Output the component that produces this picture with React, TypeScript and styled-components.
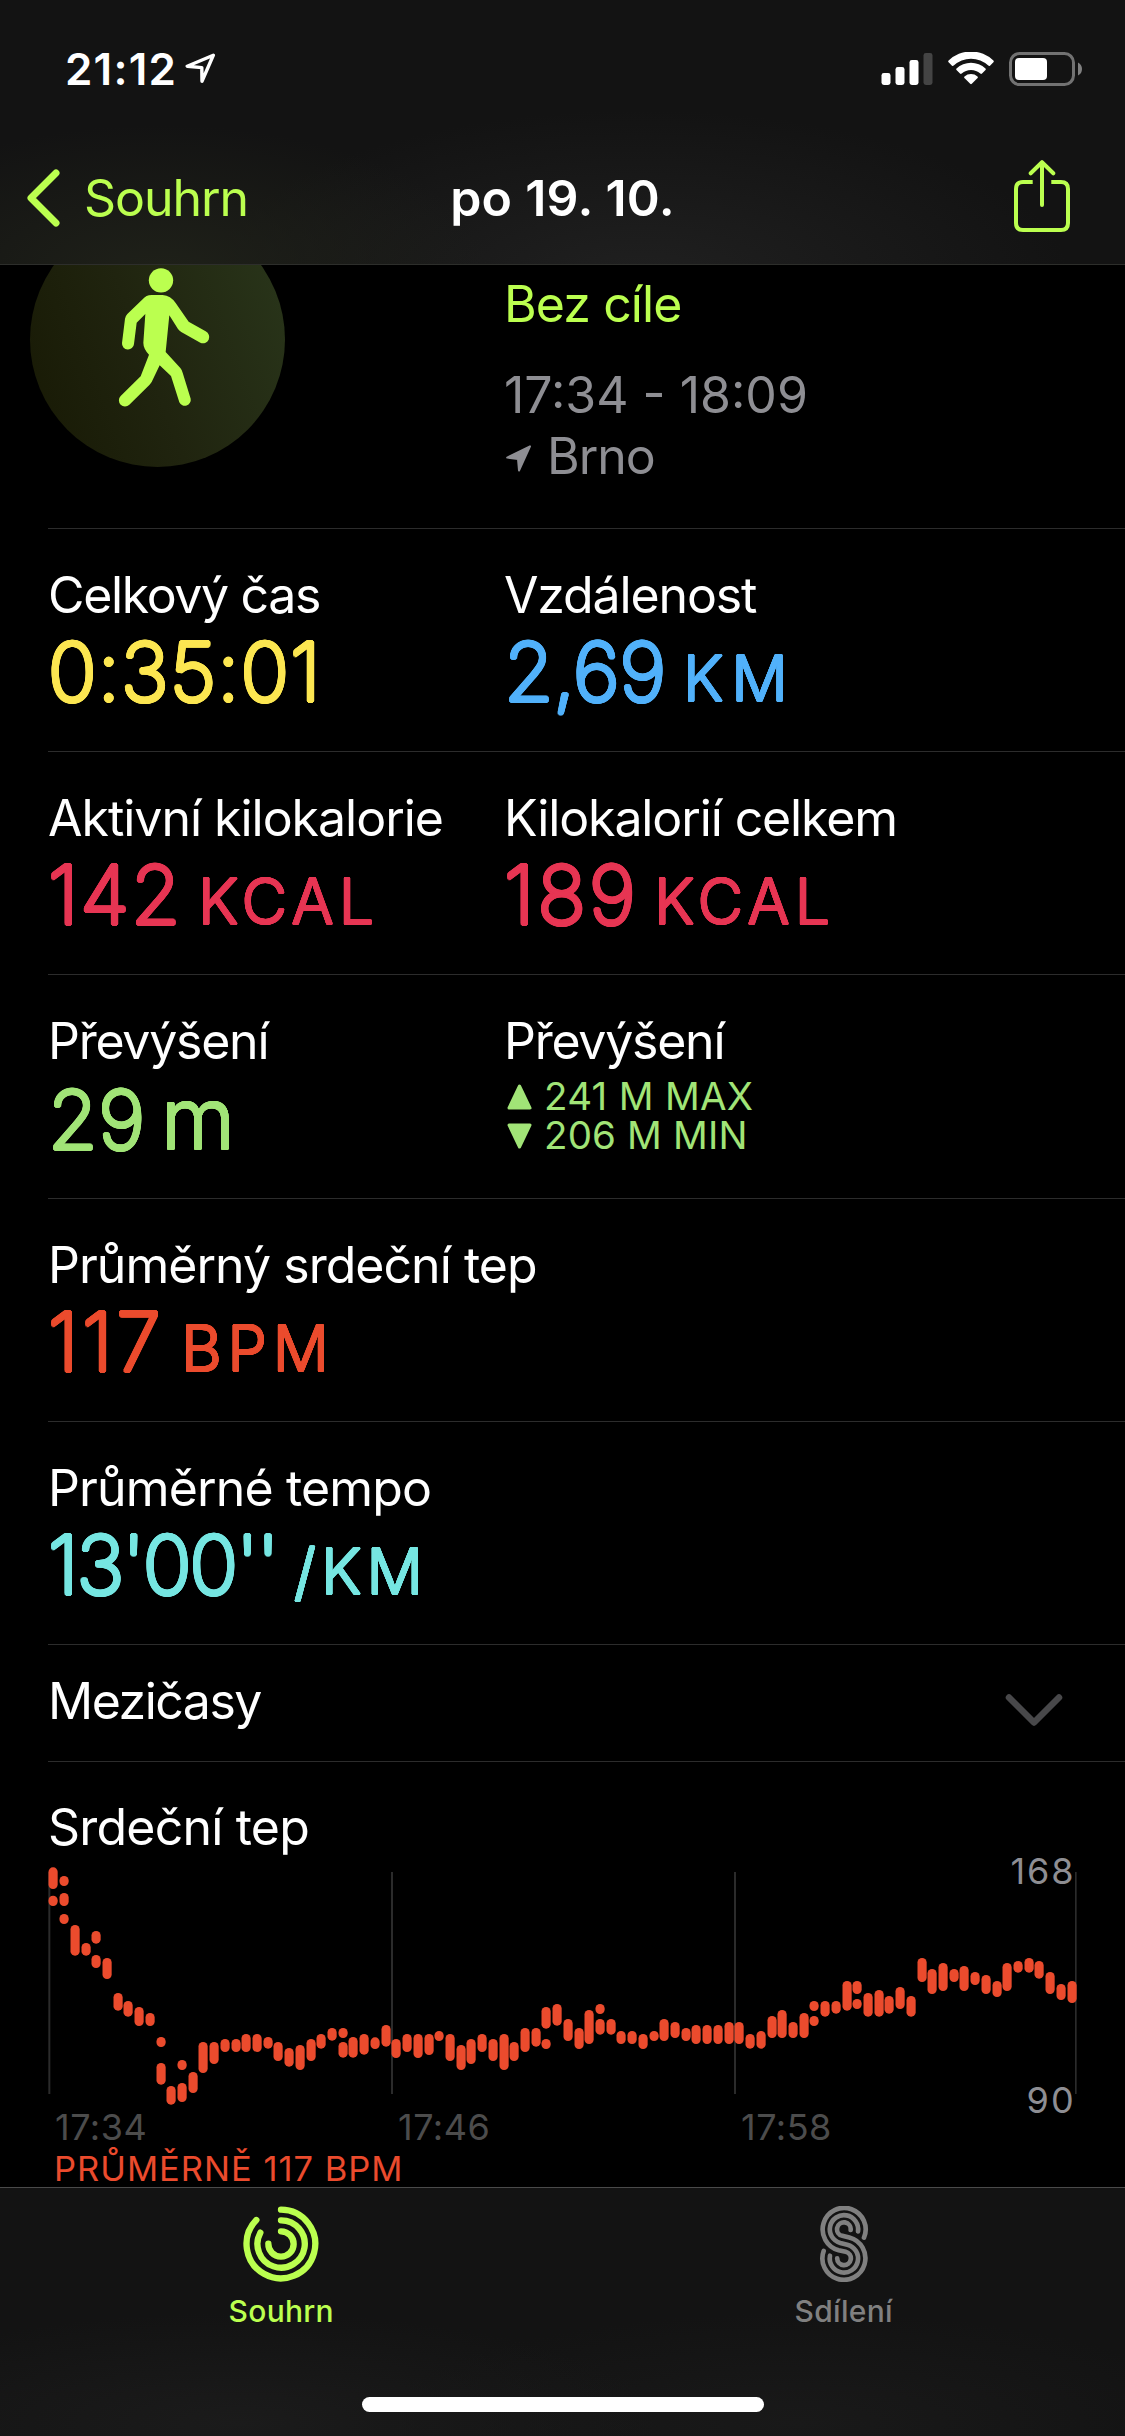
import React from "react";
import styled, { createGlobalStyle } from "styled-components";

const color = {
  lime: "#bbff4f",
  yellow: "#fce651",
  blue: "#51b1fa",
  pink: "#e73553",
  green: "#a1e477",
  red: "#eb4b2d",
  cyan: "#76e6e2",
  gray: "#8e8e93",
  axis: "#4c4c4c",
  rule: "#2c2c2c",
};

/* A ring of hard shadows thickens thin glyphs and rounds off their corners. */
const roundRing = (radius: number) =>
  Array.from({ length: 16 }, (_, i) => {
    const a = (i / 16) * Math.PI * 2;
    return `${(Math.cos(a) * radius).toFixed(2)}px ${(Math.sin(a) * radius).toFixed(2)}px 0 currentColor`;
  }).join(", ");

const GlobalStyle = createGlobalStyle`
  * { box-sizing: border-box; }
  body {
    margin: 0;
    background: #000;
    color: #fff;
    font-family: Inter, "Liberation Sans", sans-serif;
  }
  svg { display: block; flex: none; }
`;

const Screen = styled.div`
  width: 1125px;
  height: 2436px;
  display: flex;
  flex-direction: column;
  overflow: hidden;
  background: #000;
`;

const Text = styled.span<{ $ls?: number }>`
  display: block;
  font-size: 50px;
  line-height: 60px;
  white-space: nowrap;
  letter-spacing: ${(p) => p.$ls ?? 0}px;
`;

/* ---------- header ---------- */

const Header = styled.header`
  flex: none;
  height: 265px;
  border-bottom: 1px solid #2d2e2b;
  background:
    radial-gradient(ellipse 330px 150px at 160px 275px, #1f2119 0%, rgba(31, 33, 25, 0) 100%),
    radial-gradient(ellipse 430px 170px at 640px 280px, #202020 0%, rgba(32, 32, 32, 0) 100%),
    #131313;
`;

const StatusBar = styled.div`
  height: 132px;
  padding: 43px 43px 0 65px;
  display: flex;
  align-items: flex-start;
`;

const Clock = styled.span`
  font-size: 44px;
  line-height: 52px;
  font-weight: 600;
  letter-spacing: 1.2px;
`;

const StatusArrow = styled.svg`
  margin: 10px 0 0 8px;
`;

const StatusIcons = styled.div`
  margin: 9px 0 0 auto;
  display: flex;
  gap: 15px;
`;

const NavBar = styled.nav`
  height: 132px;
  padding: 0 55px 0 27px;
  display: grid;
  grid-template-columns: 400px 271px 1fr;
  align-items: center;
`;

const BackButton = styled.div`
  display: flex;
  align-items: center;
  gap: 23px;
  color: ${color.lime};
`;

const NavTitle = styled(Text)`
  justify-self: center;
  font-weight: 600;
`;

const ShareIcon = styled.svg`
  justify-self: end;
  margin-bottom: 4px;
`;

/* ---------- content ---------- */

const Content = styled.main`
  flex: 1;
  min-height: 0;
  overflow: hidden;
`;

const Hero = styled.section`
  height: 263px;
  padding-left: 30px;
  display: grid;
  grid-template-columns: 474px 1fr;
`;

const Badge = styled.div`
  width: 255px;
  height: 255px;
  margin-top: -53px;
  border-radius: 50%;
  background: linear-gradient(70deg, #191b06 8%, #20240f 45%, #29351a 95%);
`;

const HeroInfo = styled.div`
  padding-top: 9px;
`;

const Goal = styled(Text)`
  margin-bottom: 31px;
  color: ${color.lime};
`;

const Meta = styled(Text)`
  line-height: 61px;
  color: ${color.gray};
`;

const Place = styled.div`
  padding-left: 2px;
  display: flex;
  align-items: center;
  gap: 16px;
`;

const PlaceArrow = styled.svg`
  margin-top: 4px;
`;

const Row = styled.section`
  height: 223.2px;
  margin-left: 48px;
  padding-top: 36px;
  border-top: 1px solid ${color.rule};
  display: grid;
  grid-template-columns: 456px 1fr;
`;

const Value = styled.div<{ $color: string }>`
  margin-top: 2px;
  display: flex;
  align-items: baseline;
  color: ${(p) => p.$color};
  line-height: 90px;
  white-space: nowrap;
`;

const Amount = styled.span<{ $ls: number; $width?: number }>`
  width: ${(p) => (p.$width ? `${p.$width}px` : "auto")};
  font-size: 80.5px;
  font-weight: 200;
  letter-spacing: ${(p) => p.$ls}px;
  text-shadow: ${roundRing(1.8)};
`;

const Unit = styled.span<{ $size?: number; $ls?: number }>`
  font-size: ${(p) => p.$size ?? 62.5}px;
  font-weight: 300;
  letter-spacing: ${(p) => p.$ls ?? 0}px;
  text-shadow: ${roundRing(1)};
`;

const Extremes = styled.div`
  margin-top: 6px;
  padding-left: 3px;
  color: ${color.green};
`;

const Extreme = styled.div<{ $ls: number }>`
  display: flex;
  align-items: center;
  gap: 12px;
  font-size: 38.5px;
  line-height: 39px;
  letter-spacing: ${(p) => p.$ls}px;
`;

const SplitsRow = styled.section`
  height: 117px;
  margin-left: 48px;
  padding: 26px 62px 0 0;
  border-top: 1px solid ${color.rule};
  display: flex;
  justify-content: space-between;
  align-items: flex-start;
`;

const SplitsChevron = styled.svg`
  margin-top: 22px;
`;

const ChartSection = styled.section`
  border-top: 1px solid ${color.rule};
  margin-left: 48px;
  padding-top: 35px;
`;

const ChartSvg = styled.svg`
  margin-left: -48px;
  overflow: visible;
`;

const AxisLabels = styled.div`
  margin-top: -11px;
  padding-left: 7px;
  display: grid;
  grid-template-columns: 343px 343px 343px;
  font-size: 36px;
  line-height: 44px;
  letter-spacing: 0.5px;
  color: ${color.axis};
`;

const Average = styled.div`
  margin-top: 3px;
  padding-left: 6px;
  font-size: 34.5px;
  line-height: 34px;
  letter-spacing: 1px;
  color: ${color.red};
`;

/* ---------- tab bar ---------- */

const TabBar = styled.footer`
  flex: none;
  height: 249px;
  padding: 18px 0 24px;
  border-top: 1px solid #4a4a4a;
  background:
    radial-gradient(ellipse 420px 110px at 240px 235px, #1b1b1b 0%, rgba(27, 27, 27, 0) 100%),
    radial-gradient(ellipse 420px 110px at 800px 235px, #191919 0%, rgba(25, 25, 25, 0) 100%),
    #131313;
  display: flex;
  flex-direction: column;
  justify-content: space-between;
  align-items: center;
`;

const Tabs = styled.div`
  width: 100%;
  display: grid;
  grid-template-columns: 1fr 1fr;
`;

const Tab = styled.div<{ $color: string }>`
  display: flex;
  flex-direction: column;
  align-items: center;
  gap: 11px;
  color: ${(p) => p.$color};
  font-size: 30px;
  line-height: 36px;
  font-weight: 500;
  letter-spacing: 0.3px;
`;

const HomeIndicator = styled.div`
  width: 402px;
  height: 15px;
  border-radius: 8px;
  background: #fff;
`;

/* ---------- heart rate data: [x, top, bottom] in thirds of a pixel ---------- */

type Sample = [number, number, number];

const shift = (dx: number, dy: number, list: Sample[]): Sample[] =>
  list.map(([x, a, b]) => [x + dx, a + dy, b + dy]);

const samples: Sample[] = [
  ...shift(0, 0, [
    [159, 263, 326], [159, 348, 377], [192, 289, 317], [192, 340, 377], [192, 403, 431],
    [225, 436, 526], [258, 490, 526], [288, 454, 490], [288, 526, 563], [321, 535, 596],
    [354, 640, 691], [384, 664, 709], [417, 682, 737], [450, 700, 737], [483, 772, 800],
    [483, 850, 913], [513, 919, 973], [546, 841, 869], [546, 910, 965], [579, 877, 938],
    [609, 787, 878], [642, 787, 851], [675, 778, 815], [708, 778, 815], [738, 763, 815],
    [771, 763, 815], [804, 772, 805], [834, 787, 842], [867, 805, 859], [900, 796, 869],
    [933, 778, 842], [963, 763, 805], [996, 745, 781], [1029, 745, 773], [1029, 787, 832],
    [1059, 772, 832], [1092, 763, 823],
  ]),
  ...shift(1110, 210, [
    [15, 563, 596], [48, 526, 589], [78, 568, 623], [111, 553, 605], [144, 553, 623],
    [177, 553, 614], [207, 544, 572], [240, 553, 632], [273, 586, 659], [303, 568, 641],
    [336, 553, 605], [369, 568, 632], [402, 553, 659], [432, 577, 632], [465, 535, 605],
    [498, 535, 589], [528, 472, 535], [528, 568, 596], [561, 463, 526], [594, 508, 572],
    [627, 535, 596], [657, 481, 581], [690, 463, 491], [690, 508, 553], [723, 508, 553],
    [753, 544, 581], [786, 544, 581], [819, 553, 596], [852, 544, 572], [882, 508, 572],
    [915, 517, 563], [948, 535, 572], [978, 526, 581], [1011, 526, 581], [1044, 526, 581],
    [1077, 517, 581], [1107, 517, 581],
  ]),
  ...shift(2235, 0, [
    [15, 763, 805], [48, 754, 805], [81, 709, 773], [111, 691, 773], [144, 727, 773],
    [177, 700, 773], [207, 664, 692], [207, 709, 737], [240, 664, 709], [273, 664, 700],
    [306, 604, 691], [336, 604, 641], [336, 658, 686], [369, 640, 709], [402, 631, 709],
    [432, 649, 700], [465, 622, 686], [498, 649, 709], [531, 535, 605], [561, 568, 641],
    [594, 550, 632], [627, 568, 605], [657, 559, 632], [690, 577, 614], [723, 586, 641],
    [756, 604, 650], [786, 550, 632], [819, 544, 577], [852, 535, 577], [882, 544, 595],
    [915, 577, 641], [948, 613, 659], [981, 604, 668],
  ]),
];

const HeartChart = () => (
  <ChartSvg width="1125" height="259" viewBox="0 231 3375 777">
    {[145, 1173, 2202, 3225].map((x) => (
      <rect key={x} x={x} y={276} width={x === 3225 ? 5 : 6} height={666} fill="#2b2b2b" />
    ))}
    {samples.map(([x, top, bottom], i) => (
      <rect key={i} x={x - 13.5} y={top - 1} width={27.5} height={bottom - top + 2} rx={13.5} fill={color.red} />
    ))}
    <g fill={color.gray} fontSize="108" letterSpacing="6" textAnchor="end">
      <text x={3227} y={312}>168</text>
      <text x={3227} y={998}>90</text>
    </g>
  </ChartSvg>
);

const Walker = () => (
  <svg width="255" height="255" viewBox="90 -130 765 765" fill={color.lime}>
    <circle cx="483" cy="75" r="36.5" />
    <path d="M455 119H488Q512 121 527 143L566 199L617 228A18 18 0 0 1 601 262L545 231Q538 227 534 221L508 180L497 290L541 338Q546 344 548 352L572 430A18 18 0 0 1 538 441L513 362L479 330L455 380Q452 385 448 389L388 448A18 18 0 0 1 362 422L422 363L447 298Q430 280 430 262L436 176L410 202L402 266A18 18 0 0 1 366 263L375 190Q377 181 382 176L428 132Q438 119 455 119Z" />
  </svg>
);

interface MetricProps {
  label: string;
  ls: number;
  tint: string;
  amount: string;
  amountLs: number;
  width?: number;
  unit?: string;
  unitLs?: number;
  unitSize?: number;
}

const Metric = (p: MetricProps) => (
  <div>
    <Text $ls={p.ls}>{p.label}</Text>
    <Value $color={p.tint}>
      <Amount $ls={p.amountLs} $width={p.width}>{p.amount}</Amount>
      {p.unit && <Unit $ls={p.unitLs} $size={p.unitSize}>{p.unit}</Unit>}
    </Value>
  </div>
);

export default function App() {
  return (
    <Screen>
      <GlobalStyle />
      <Header>
        <StatusBar>
          <Clock>21:12</Clock>
          <StatusArrow width="31" height="31" viewBox="0 0 31 31" fill="none" stroke="#fff" strokeWidth="3.4" strokeLinejoin="round">
            <path d="M28.3 2.3L2.2 13.2L16.8 14.6L17 28.2Z" />
          </StatusArrow>
          <StatusIcons>
            <svg width="52" height="34" viewBox="0 0 52 34" fill="#fff">
              <rect x="0.5" y="21" width="9" height="12" rx="2.4" />
              <rect x="14.5" y="15" width="9" height="18" rx="2.4" />
              <rect x="28.5" y="8" width="9" height="25" rx="2.4" />
              <rect x="42.5" y="1" width="9" height="32" rx="2.4" fill="#444" />
            </svg>
            <svg width="46" height="34" viewBox="0 0 46 34" fill="#fff">
              <path d="M0.6 10.2Q-0.2 9.4 0.6 8.6A32 32 0 0 1 45.4 8.6Q46.2 9.4 45.4 10.2L42 13.7Q41.2 14.4 40.3 13.6A25 25 0 0 0 5.7 13.6Q4.8 14.4 4 13.7Z" />
              <path d="M8.5 18.1Q7.7 17.3 8.5 16.5A21 21 0 0 1 37.5 16.5Q38.3 17.3 37.5 18.1L34 21.6Q33.2 22.3 32.3 21.6A14 14 0 0 0 13.7 21.6Q12.8 22.3 12 21.6Z" />
              <path d="M16.4 26Q15.7 25.2 16.5 24.5A10 10 0 0 1 29.5 24.5Q30.3 25.2 29.6 26L23.8 31.8Q23 32.5 22.2 31.8Z" />
            </svg>
            <svg width="73" height="34" viewBox="0 0 73 34">
              <rect x="1.5" y="1.5" width="63" height="31" rx="9" fill="none" stroke="#727272" strokeWidth="3" />
              <rect x="6" y="6" width="32" height="22" rx="4" fill="#fff" />
              <path d="M69 10.5Q73 12.5 73 17T69 23.5Z" fill="#808080" />
            </svg>
          </StatusIcons>
        </StatusBar>
        <NavBar>
          <BackButton>
            <svg width="34" height="58" viewBox="0 0 34 58" fill="none" stroke={color.lime} strokeWidth="7" strokeLinecap="round" strokeLinejoin="round">
              <path d="M29 4L4 29L29 54" />
            </svg>
            <Text $ls={-1.06}>Souhrn</Text>
          </BackButton>
          <NavTitle $ls={0.25}>po 19. 10.</NavTitle>
          <ShareIcon width="56" height="72" viewBox="0 0 56 72" fill="none" stroke={color.lime} strokeWidth="4" strokeLinecap="round" strokeLinejoin="round">
            <path strokeLinecap="butt" d="M18.7 22H9Q2 22 2 29V63Q2 70 9 70H47Q54 70 54 63V29Q54 22 47 22H37.3" />
            <path d="M28 45V3M16.7 13.3L28 2.2L39.3 13.3" />
          </ShareIcon>
        </NavBar>
      </Header>

      <Content>
        <Hero>
          <Badge>
            <Walker />
          </Badge>
          <HeroInfo>
            <Goal $ls={-0.9}>Bez cíle</Goal>
            <Meta>17:34 - 18:09</Meta>
            <Place>
              <PlaceArrow width="25" height="27" viewBox="0 0 25 27" fill={color.gray} stroke={color.gray} strokeWidth="2" strokeLinejoin="round">
                <path d="M24 1.3L1.2 12.6L12 14L13 25.5Z" />
              </PlaceArrow>
              <Meta $ls={-1}>Brno</Meta>
            </Place>
          </HeroInfo>
        </Hero>

        <Row>
          <Metric label="Celkový čas" ls={-1.35} tint={color.yellow} amount="0:35:01" amountLs={1} />
          <Metric label="Vzdálenost" ls={-1.14} tint={color.blue} amount="2,69" amountLs={-0.5} width={179} unit="KM" unitLs={8} />
        </Row>
        <Row>
          <Metric label="Aktivní kilokalorie" ls={-1.02} tint={color.pink} amount="142" amountLs={1.5} width={150} unit="KCAL" unitLs={5.3} />
          <Metric label="Kilokalorií celkem" ls={-1.12} tint={color.pink} amount="189" amountLs={2.8} width={150} unit="KCAL" unitLs={5.3} />
        </Row>
        <Row>
          <Metric label="Převýšení" ls={-1.25} tint={color.green} amount="29" amountLs={0.5} width={113} unit="m" unitSize={84.5} />
          <div>
            <Text $ls={-1.25}>Převýšení</Text>
            <Extremes>
              <Extreme $ls={0.3}>
                <svg width="25" height="26" viewBox="0 0 25 26" fill={color.green} stroke={color.green} strokeWidth="3" strokeLinejoin="round">
                  <path d="M12.5 2L23 24H2Z" />
                </svg>
                241 M MAX
              </Extreme>
              <Extreme $ls={0.15}>
                <svg width="25" height="26" viewBox="0 0 25 26" fill={color.green} stroke={color.green} strokeWidth="3" strokeLinejoin="round">
                  <path d="M12.5 24L23 2H2Z" />
                </svg>
                206 M MIN
              </Extreme>
            </Extremes>
          </div>
        </Row>
        <Row>
          <Metric label="Průměrný srdeční tep" ls={-0.96} tint={color.red} amount="117" amountLs={3.5} width={133} unit="BPM" unitLs={6} />
        </Row>
        <Row>
          <Metric label="Průměrné tempo" ls={-0.85} tint={color.cyan} amount={"13'00''"} amountLs={-2.1} width={246} unit="/KM" unitLs={5.3} />
        </Row>

        <SplitsRow>
          <Text $ls={-1.5}>Mezičasy</Text>
          <SplitsChevron width="58" height="34" viewBox="0 0 58 34" fill="none" stroke="#48484a" strokeWidth="6.5" strokeLinecap="round" strokeLinejoin="round">
            <path d="M4 4.5L29 29.5L54 4.5" />
          </SplitsChevron>
        </SplitsRow>

        <ChartSection>
          <Text $ls={-0.8}>Srdeční tep</Text>
          <HeartChart />
          <AxisLabels>
            <span>17:34</span>
            <span>17:46</span>
            <span>17:58</span>
          </AxisLabels>
          <Average>PRŮMĚRNĚ 117 BPM</Average>
        </ChartSection>
      </Content>

      <TabBar>
        <Tabs>
          <Tab $color={color.lime}>
            <svg width="76" height="76" viewBox="129 78 228 228" fill="none" stroke={color.lime} strokeWidth="19" strokeLinecap="round">
              <path d="M243 89A103 103 0 1 1 169 120" />
              <path d="M243 121A71 71 0 1 1 181 158" />
              <path d="M243 154A38 38 0 1 1 205 191" />
            </svg>
            Souhrn
          </Tab>
          <Tab $color="#808080">
            <svg width="76" height="76" viewBox="138 78 228 228" fill="none" stroke="#808080" strokeWidth="14" strokeLinecap="round">
              <path d="M312 173A64.5 64.5 0 1 0 236 210.5L257 215A20.5 20.5 0 1 1 231.5 235" />
              <path d="M294 154A42.5 42.5 0 1 0 241 189L262 194A42.5 42.5 0 1 1 210 227" />
              <path d="M272 150A20.5 20.5 0 1 0 247 167.500L268 172.500A64.5 64.5 0 1 1 191 213" />
            </svg>
            Sdílení
          </Tab>
        </Tabs>
        <HomeIndicator />
      </TabBar>
    </Screen>
  );
}
